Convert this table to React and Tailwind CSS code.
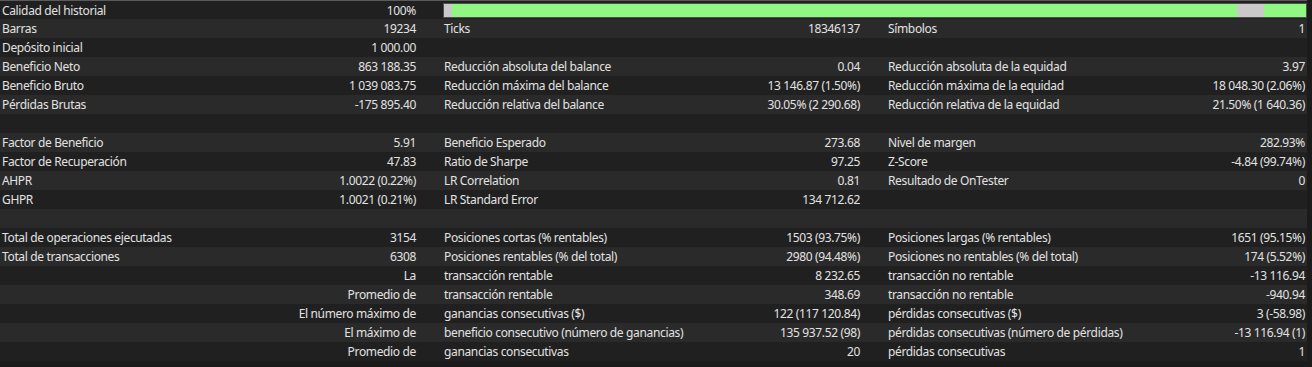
const groupA = "w-[418px] flex items-center justify-between pl-[2px] pr-[2px]";
const groupB = "w-[420px] ml-[24px] flex items-center justify-between pl-[2px] pr-[2px]";
const groupC = "w-[421px] ml-[24px] flex items-center justify-between pl-[2px] pr-[2px]";

const rows = [
  { a: ["Calidad del historial", "100%"], bar: true },
  { a: ["Barras", "19234"], b: ["Ticks", "18346137"], c: ["Símbolos", "1"] },
  { a: ["Depósito inicial", "1 000.00"] },
  { a: ["Beneficio Neto", "863 188.35"], b: ["Reducción absoluta del balance", "0.04"], c: ["Reducción absoluta de la equidad", "3.97"] },
  { a: ["Beneficio Bruto", "1 039 083.75"], b: ["Reducción máxima del balance", "13 146.87 (1.50%)"], c: ["Reducción máxima de la equidad", "18 048.30 (2.06%)"] },
  { a: ["Pérdidas Brutas", "-175 895.40"], b: ["Reducción relativa del balance", "30.05% (2 290.68)"], c: ["Reducción relativa de la equidad", "21.50% (1 640.36)"] },
  {},
  { a: ["Factor de Beneficio", "5.91"], b: ["Beneficio Esperado", "273.68"], c: ["Nivel de margen", "282.93%"] },
  { a: ["Factor de Recuperación", "47.83"], b: ["Ratio de Sharpe", "97.25"], c: ["Z-Score", "-4.84 (99.74%)"] },
  { a: ["AHPR", "1.0022 (0.22%)"], b: ["LR Correlation", "0.81"], c: ["Resultado de OnTester", "0"] },
  { a: ["GHPR", "1.0021 (0.21%)"], b: ["LR Standard Error", "134 712.62"] },
  {},
  { a: ["Total de operaciones ejecutadas", "3154"], b: ["Posiciones cortas (% rentables)", "1503 (93.75%)"], c: ["Posiciones largas (% rentables)", "1651 (95.15%)"] },
  { a: ["Total de transacciones", "6308"], b: ["Posiciones rentables (% del total)", "2980 (94.48%)"], c: ["Posiciones no rentables (% del total)", "174 (5.52%)"] },
  { a: ["", "La"], b: ["transacción rentable", "8 232.65"], c: ["transacción no rentable", "-13 116.94"] },
  { a: ["", "Promedio de"], b: ["transacción rentable", "348.69"], c: ["transacción no rentable", "-940.94"] },
  { a: ["", "El número máximo de"], b: ["ganancias consecutivas ($)", "122 (117 120.84)"], c: ["pérdidas consecutivas ($)", "3 (-58.98)"] },
  { a: ["", "El máximo de"], b: ["beneficio consecutivo (número de ganancias)", "135 937.52 (98)"], c: ["pérdidas consecutivas (número de pérdidas)", "-13 116.94 (1)"] },
  { a: ["", "Promedio de"], b: ["ganancias consecutivas", "20"], c: ["pérdidas consecutivas", "1"] },
];

const Cell = ({ cls, pair }) => (
  <div className={cls}>
    <span className="whitespace-nowrap">{pair ? pair[0] : ""}</span>
    <span className="whitespace-nowrap">{pair ? pair[1] : ""}</span>
  </div>
);

const HistoryBar = () => (
  <div className="ml-[25px] flex-1 h-[15px] -mt-[1px] border border-[#4f4f4f] flex">
    <div className="w-[8px] bg-[#c9c9c9]" />
    <div className="w-[785px] bg-[#90f782]" />
    <div className="w-[27px] bg-[#c9c9c9]" />
    <div className="flex-1 bg-[#90f782]" />
  </div>
);

export default function App() {
  return (
    <div className="w-[1312px] h-[367px] bg-[#1b1b1b] overflow-hidden text-[12px] tracking-[-0.35px] text-[#e2e2e2] font-['Noto_Sans',sans-serif]">
      <div className="w-[1307px] border-t border-[#5a5a5a]">
        {rows.map((r, i) => (
          <div
            key={i}
            className={`flex items-center pt-[1px] ${i === 0 ? "h-[18px]" : "h-[19px]"} ${i % 2 === 0 ? "bg-[#202020]" : "bg-[#2a2a2a]"}`}
          >
            <Cell cls={groupA} pair={r.a} />
            {r.bar ? (
              <HistoryBar />
            ) : (
              <>
                <Cell cls={groupB} pair={r.b} />
                <Cell cls={groupC} pair={r.c} />
              </>
            )}
          </div>
        ))}
      </div>
    </div>
  );
}
